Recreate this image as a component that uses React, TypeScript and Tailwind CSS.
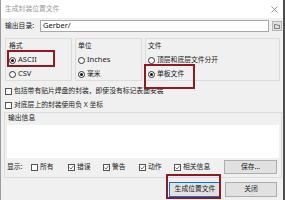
import React from "react";

const FONT = { fontFamily: "'Noto Sans', 'Noto Sans CJK SC', sans-serif" };

function Radio({ checked, label, latin }: { checked?: boolean; label: string; latin?: boolean }) {
  return (
    <div className="flex items-center h-[14px]">
      <span className="w-[7px] h-[7px] rounded-full border border-[#333] bg-white flex items-center justify-center shrink-0">
        {checked && <span className="w-[3px] h-[3px] rounded-full bg-[#111]" />}
      </span>
      <span
        className={
          latin
            ? "ml-[2px] text-[7.5px] leading-none text-[#1a1a1a] whitespace-nowrap"
            : "ml-[2px] text-[6.8px] leading-none text-[#1a1a1a] whitespace-nowrap"
        }
      >
        {label}
      </span>
    </div>
  );
}

function Check({ checked, label }: { checked?: boolean; label: string }) {
  return (
    <div className="flex items-center">
      <span className="w-[7px] h-[7px] border border-[#555] bg-white flex items-center justify-center shrink-0">
        {checked && (
          <svg width="5" height="5" viewBox="0 0 5 5">
            <path d="M0.5 2.6 L2 4 L4.6 0.8" stroke="#333" strokeWidth="0.7" fill="none" />
          </svg>
        )}
      </span>
      <span className="ml-[2px] text-[6.8px] leading-none text-[#1a1a1a] whitespace-nowrap">{label}</span>
    </div>
  );
}

export default function App() {
  return (
    <div
      style={FONT}
      className="relative w-[285px] h-[200px] bg-[#f0f0f0] overflow-hidden border-l border-[#9a9a9a] border-r-2 border-r-[#4d4d4d]"
    >
      {/* title bar */}
      <div className="h-[18px] bg-white flex items-center justify-between pl-[4px] pr-[4px]">
        <span className="text-[6.8px] leading-none text-[#9a9a9a]">生成封装位置文件</span>
        <svg width="7" height="7" viewBox="0 0 7 7" className="mr-[1px]">
          <path d="M0.5 0.5 L6.5 6.5 M6.5 0.5 L0.5 6.5" stroke="#777" strokeWidth="0.8" />
        </svg>
      </div>

      {/* output dir */}
      <div className="mt-[2px] flex items-center h-[12px] pl-[4px]">
        <span className="w-[35px] text-[6.8px] leading-none text-[#1a1a1a]">输出目录:</span>
        <div className="w-[229px] h-[12px] bg-white border border-[#a9a9a9] flex items-center pl-[2px]">
          <span className="text-[7.5px] leading-none text-[#111]">Gerber/</span>
        </div>
        <div className="ml-[3px] w-[10px] h-[10px] bg-[#e1e1e1] border border-[#b5b5b5] flex items-center justify-center">
          <svg width="6" height="5" viewBox="0 0 6 5">
            <path d="M0.5 0.5 H2.3 L2.8 1.2 H5.5 V4.5 H0.5 Z" stroke="#555" strokeWidth="0.7" fill="none" />
          </svg>
        </div>
      </div>

      {/* groups */}
      <div className="mt-[6px] flex pl-[4px] h-[43px]">
        <div className="w-[67px] h-full border border-[#dcdcdc] pt-[3px] pl-[3px]">
          <div className="h-[8px] text-[6.8px] leading-none text-[#1a1a1a] flex items-center">格式</div>
          <div className="mt-[3px]">
            <Radio checked latin label="ASCII" />
            <Radio latin label="CSV" />
          </div>
        </div>
        <div className="ml-[3px] w-[67px] h-full border border-[#dcdcdc] pt-[3px] pl-[2px]">
          <div className="h-[8px] text-[6.8px] leading-none text-[#1a1a1a] flex items-center">单位</div>
          <div className="mt-[3px]">
            <Radio latin label="Inches" />
            <Radio checked label="毫米" />
          </div>
        </div>
        <div className="ml-[3px] w-[135px] h-full border border-[#dcdcdc] pt-[3px] pl-[2px]">
          <div className="h-[8px] text-[6.8px] leading-none text-[#1a1a1a] flex items-center">文件</div>
          <div className="mt-[3px]">
            <Radio label="顶层和底层文件分开" />
            <Radio checked label="单板文件" />
          </div>
        </div>
      </div>

      {/* checkboxes */}
      <div className="mt-[3px] pl-[4px]">
        <div className="h-[14px] flex items-center">
          <Check label="包括带有贴片焊盘的封装，即使没有标记表面安装" />
        </div>
        <div className="h-[14px] flex items-center">
          <Check label="对底层上的封装使用负 X 坐标" />
        </div>
      </div>

      {/* output info group */}
      <div className="ml-[3px] w-[278px] h-[66px] border border-[#dcdcdc] pt-[1px] px-[2px]">
        <div className="h-[8px] text-[6.8px] leading-none text-[#1a1a1a] flex items-center pl-[1px]">输出信息</div>
        <div className="mt-[3px] h-[33px] bg-white" />
        <div className="mt-[2px] h-[14px] flex items-center">
          <span className="w-[24px] text-[6.8px] leading-none text-[#1a1a1a]">显示:</span>
          <div className="w-[37px]"><Check label="所有" /></div>
          <div className="w-[35px]"><Check checked label="错误" /></div>
          <div className="w-[36px]"><Check checked label="警告" /></div>
          <div className="w-[35px]"><Check checked label="动作" /></div>
          <div className="w-[50px]"><Check checked label="相关信息" /></div>
          <div className="w-[53px] h-[14px] bg-[#e1e1e1] border border-[#adadad] flex items-center justify-center text-[6.8px] leading-none text-[#1a1a1a]">
            保存...
          </div>
        </div>
      </div>

      {/* bottom buttons */}
      <div className="mt-[4px] flex justify-end pr-[6px] gap-[4px]">
        <div className="w-[52px] h-[15px] bg-[#e1e1e1] border border-[#0078d7] flex items-center justify-center text-[6.8px] leading-none text-[#1a1a1a]">
          生成位置文件
        </div>
        <div className="w-[52px] h-[15px] bg-[#e1e1e1] border border-[#adadad] flex items-center justify-center text-[6.8px] leading-none text-[#1a1a1a]">
          关闭
        </div>
      </div>

      {/* red highlight boxes */}
      <div className="absolute left-[6px] top-[50px] w-[48px] h-[17px] border-2 border-[#8e1b24]" />
      <div className="absolute left-[143px] top-[64px] w-[51px] h-[25px] border-2 border-[#8e1b24]" />
      <div className="absolute left-[165px] top-[174px] w-[55px] h-[25px] border-2 border-[#8e1b24]" />
    </div>
  );
}
